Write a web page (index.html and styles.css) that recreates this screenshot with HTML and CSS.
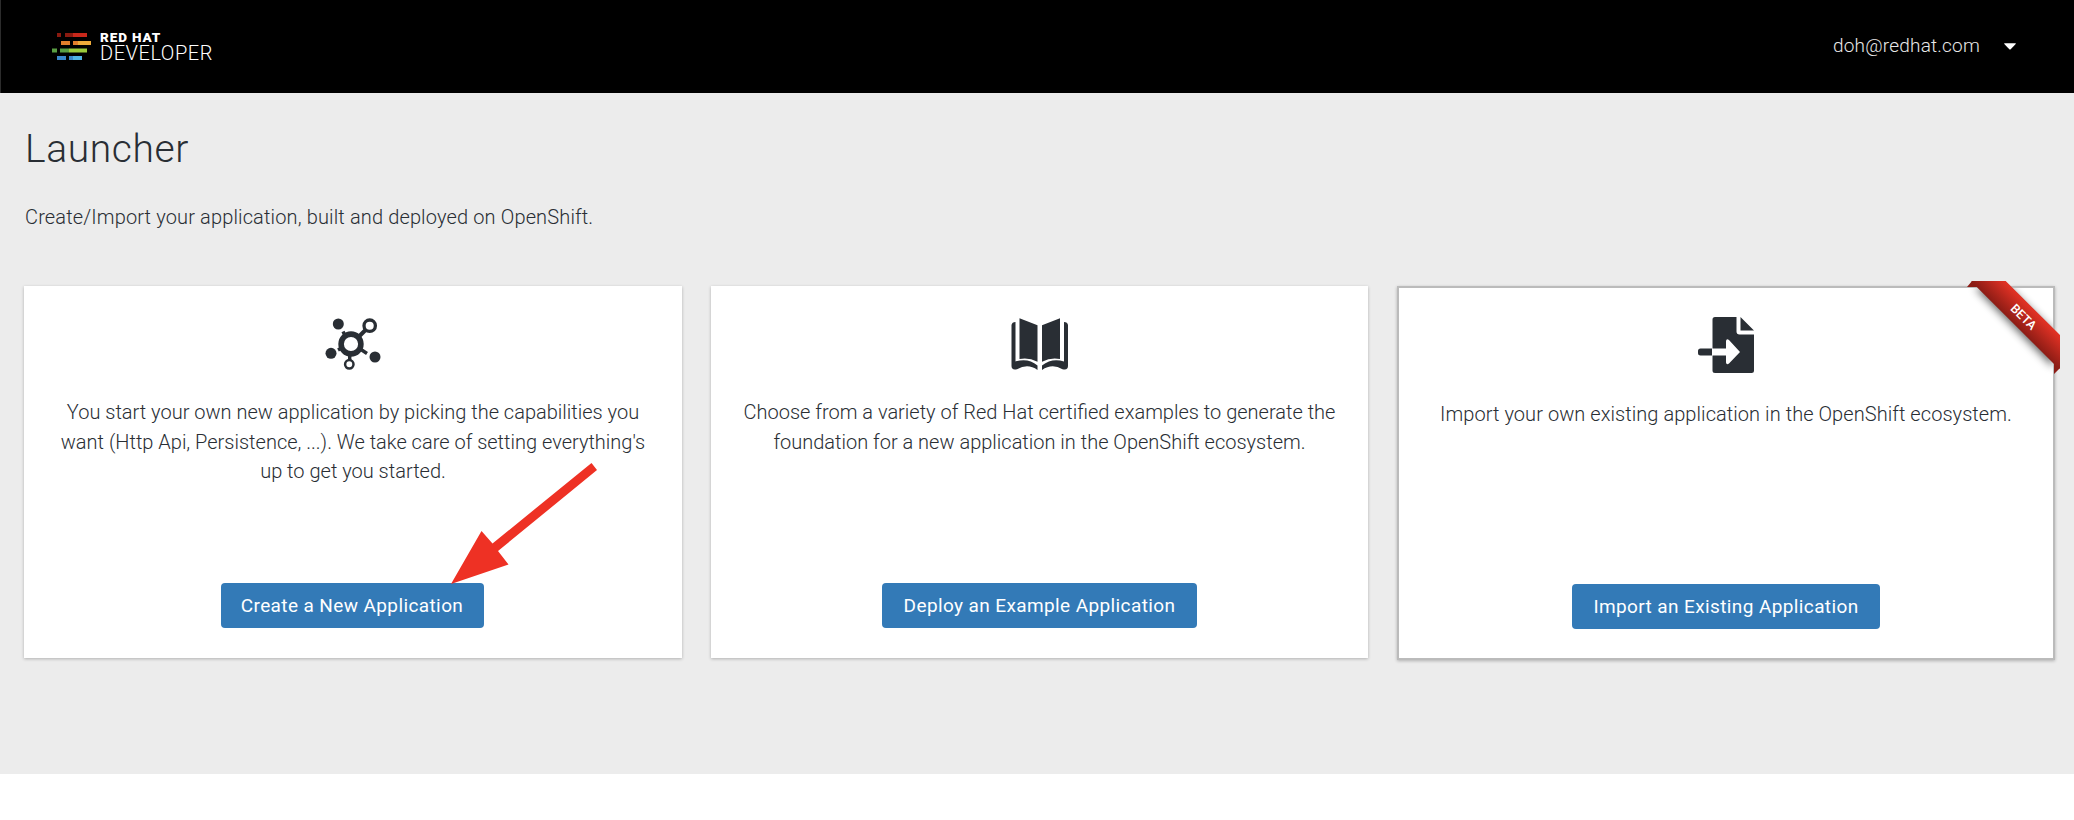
FILE: index.html
```html
<!DOCTYPE html>
<html lang="en">
<head>
<meta charset="utf-8">
<title>Launcher</title>
<link rel="stylesheet" href="styles.css">
</head>
<body>
<div class="page">
  <header class="topbar">
    <div class="brand">
      <svg class="brand-mark" width="40" height="30" viewBox="0 0 40 30">
        <path fill="#8a1a10" d="M5 1h4v4H5zM13 1h9v4h-9z"/><path fill="#c9281b" d="M21 1h14v4H21z"/>
        <path fill="#e37f2c" d="M9 9h9v4H9zM21 9h5v4h-5z"/><path fill="#edab3a" d="M26 9h13v4H26z"/>
        <path fill="#5a9e43" d="M0 16.500h5v4H0zM8 16.500h9v4H8z"/><path fill="#9bcb3c" d="M17 16.500h18v4H17z"/>
        <path fill="#3a87cb" d="M5 24h9v4H5zM17 24h4v4h-4z"/><path fill="#50b4e4" d="M21 24h9v4h-9z"/>
      </svg>
      <div class="brand-text">
        <span class="brand-top">RED HAT</span>
        <span class="brand-bottom">DEVELOPER</span>
      </div>
    </div>
    <div class="user">
      <span class="user-mail">doh@redhat.com</span>
      <svg width="12" height="7" viewBox="0 0 12 7"><path fill="#fff" d="M.6.2h10.800q.8.200.3.900L6.700 6.200q-.7.700-1.400 0L.3 1.100Q-.2.400.6.200z"/></svg>
    </div>
  </header>
  <main class="content">
    <h1 class="title">Launcher</h1>
    <p class="lead">Create/Import your application, built and deployed on OpenShift.</p>
    <div class="cards">
      <section class="card">
        <svg class="icon" width="58" height="56" viewBox="0 0 58 56">
          <g fill="#292e34"><circle cx="14.300" cy="8" r="5.500"/><circle cx="7" cy="37.300" r="5.500"/><circle cx="51" cy="41" r="5.500"/></g>
          <g fill="none" stroke="#292e34"><circle cx="27" cy="28" r="9.900" stroke-width="5.600"/><circle cx="45.700" cy="9.700" r="5.700" stroke-width="3.300"/><circle cx="25.300" cy="48.300" r="4.200" stroke-width="2.500"/>
          <path stroke-width="4" d="M35 20.500l7-7"/><path stroke-width="3.400" d="M25.700 39v5.500M21.500 20.500l-2.500-5M17.500 32l-3.500 2M37 33.500l6 4"/></g>
        </svg>
        <p class="text">You start your own new application by picking the capabilities you<br>want (Http Api, Persistence, ...). We take care of setting everything's<br>up to get you started.</p>
        <button class="btn btn-create">Create a New Application</button>
        <svg class="arrow" width="150" height="122" viewBox="0 0 150 122"><path fill="#ee3124" d="M0 121 30.500 68 41.500 80.500 140.500 0l5.500 7-99 81 10.500 13.500z"/></svg>
      </section>
      <section class="card card-mid">
        <svg class="icon" width="58" height="56" viewBox="0 0 58 56">
          <g fill="#292e34"><path d="M8.500 2.200 26.500 9.300v36.500Q17.500 41 8.500 43z"/><path d="M4.500 6v39.500Q17 41.500 26.500 49.500V54Q17 47 6 53.200.5 54.500.5 50V9Q1 6 4.500 6z"/><path d="M49 2.200 31 9.300v36.500Q40 41 49 43z"/><path d="M53 6v39.500Q41 41.500 31 49.500V54Q41 47 51.500 53.200 57 54.500 57 50V9Q56.500 6 53 6z"/></g>
        </svg>
        <p class="text">Choose from a variety of Red Hat certified examples to generate the<br>foundation for a new application in the OpenShift ecosystem.</p>
        <button class="btn btn-deploy">Deploy an Example Application</button>
      </section>
      <section class="card card-outlined">
        <svg class="icon" width="58" height="56" viewBox="0 0 58 56">
          <path fill="#292e34" transform="translate(1)" d="M17 0H38.500v14.500q0 3 3 3H56V53.500q0 2.500-2.500 2.500H17q-2.500 0-2.500-2.500V38.500H28v7q.5 3 3 1l11-11.500L31 23q-2.500-2-3 1v7.500H14.500V2.500Q14.500 0 17 0zM42.500 0 56 13.500H42.500zM2.500 31.500h11.500v7H2.500Q0 38.500 0 36v-2q0-2.500 2.500-2.500z"/>
        </svg>
        <p class="text text-import">Import your own existing application in the OpenShift ecosystem.</p>
        <button class="btn btn-import">Import an Existing Application</button>
        <svg class="ribbon" width="93" height="93" viewBox="0 0 93 93">
          <defs>
            <linearGradient id="red" gradientUnits="userSpaceOnUse" x1="65" y1="28" x2="48.500" y2="44.500"><stop offset="0" stop-color="#e03124"/><stop offset="1" stop-color="#8c1c15"/></linearGradient>
            <filter id="blur" x="-30%" y="-30%" width="160%" height="160%"><feGaussianBlur stdDeviation="4"/></filter>
            <clipPath id="inside"><path d="M-20 7H86V110H-20z"/></clipPath>
          </defs>
          <g clip-path="url(#inside)"><path d="M8 7 38 3 90 54 86 86z" fill="#000" opacity=".6" filter="url(#blur)"/></g>
          <path fill="#8c1c15" d="M5 0 0 6h12zM93 87l-6 6V80z"/>
          <path fill="url(#red)" d="M4.700 0h34L93 54v33.500h-1.500L87 83 10 6.300 4.700 1z"/>
          <text class="ribbon-text" transform="translate(56.500 36) rotate(45)" text-anchor="middle" y="4.200">BETA</text>
        </svg>
      </section>
    </div>
  </main>
</div>
</body>
</html>
```
FILE: styles.css
```css
* { box-sizing: border-box; }
body { margin: 0; background: #fff; font-family: Roboto, "Open Sans", sans-serif; color: #292e34; }
.page { height: 774px; background: #ececec; }
.topbar { height: 93px; background: #000; border-left: 1px solid #2c2c2c; display: flex; justify-content: space-between; align-items: center; padding: 0 58px 0 51px; }
.brand { display: flex; align-items: center; gap: 8px; }
.brand-text { display: flex; flex-direction: column; color: #fff; white-space: nowrap; }
.brand-top { font-weight: 900; font-size: 13.500px; line-height: 13px; letter-spacing: .9px; }
.brand-bottom { font-weight: 300; font-size: 20px; line-height: 19px; letter-spacing: .55px; }
.user { display: flex; align-items: center; gap: 24px; color: #e8e8e8; }
.user-mail { font-weight: 300; font-size: 19px; letter-spacing: .2px; padding-bottom: 2px; }
.content { padding: 36px 19px 0 24px; }
.title { margin: 0 0 0 1px; font-weight: 300; font-size: 39px; line-height: 40px; letter-spacing: .6px; }
.lead { margin: 33px 0 0 1px; font-weight: 300; font-size: 20px; line-height: 30px; letter-spacing: .14px; }
.cards { display: flex; align-items: flex-start; margin-top: 54px; gap: 29px; }
.card { position: relative; width: 658px; height: 372px; background: #fff; box-shadow: 0 1px 3px rgba(0,0,0,.25); padding: 30px 0; display: flex; flex-direction: column; align-items: center; }
.card-mid { width: 657px; }
.card-outlined { border: 2px solid #bbb; height: 374px; padding: 29px 0; }
.icon { display: block; flex: none; }
.text { margin: 26px 0 0; font-weight: 300; font-size: 20px; line-height: 29.600px; text-align: center; white-space: nowrap; }
.text-import { margin-top: 27px; letter-spacing: .06px; }
.btn { margin-top: auto; height: 45px; border: 0; border-radius: 4px; background: #337ab7; color: #fff; font: 400 19px/45px Roboto, sans-serif; letter-spacing: .39px; padding: 0; white-space: nowrap; }
.btn-create { width: 263px; margin-right: 2px; }
.btn-deploy { width: 315px; }
.btn-import { width: 308px; }
.arrow { position: absolute; left: 427px; top: 177px; }
.ribbon { position: absolute; right: -7px; top: -7px; overflow: visible; }
.ribbon-text { font: 500 12.500px Roboto, sans-serif; fill: #fff; }
```
